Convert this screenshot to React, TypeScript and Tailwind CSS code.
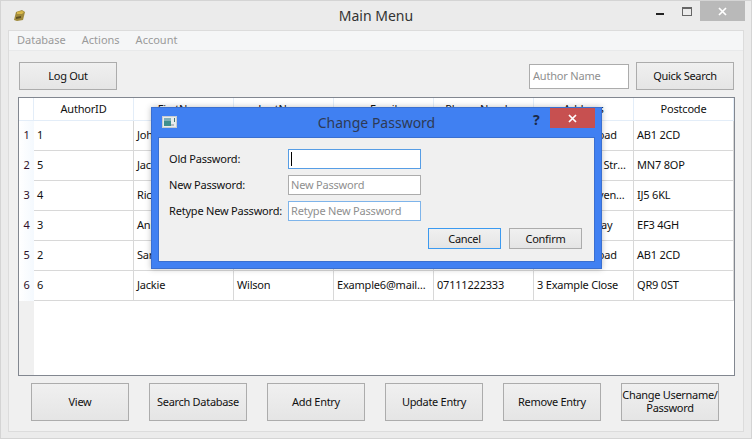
const font = "font-['Noto_Sans','Open_Sans',sans-serif]";

const columns = ["AuthorID", "FirstName", "LastName", "Email", "Phone Number", "Address", "Postcode"];

const rows = [
  ["1", "John", "Smith", "Example1@mail.com", "07123456789", "1 Example Road", "AB1 2CD"],
  ["5", "Jack", "Jones", "Example5@mail.com", "07987654321", "555 Example Street", "MN7 8OP"],
  ["4", "Rick", "Brown", "Example4@mail.com", "07555666777", "4 Example Avenue", "IJ5 6KL"],
  ["3", "Anna", "Green", "Example3@mail.com", "07444333222", "3 Example Way", "EF3 4GH"],
  ["2", "Sarah", "White", "Example2@mail.com", "07222333444", "1 Example Road", "AB1 2CD"],
  ["6", "Jackie", "Wilson", "Example6@mail.com", "07111222333", "3 Example Close", "QR9 0ST"],
];

const bottomButtons = ["View", "Search Database", "Add Entry", "Update Entry", "Remove Entry"];

function Button({ children, className = "" }: { children: React.ReactNode; className?: string }) {
  return (
    <button className={`shrink-0 border border-[#acacac] bg-gradient-to-b from-[#f0f0f0] to-[#e5e5e5] text-[11px] leading-[13px] tracking-[-0.3px] text-[#111] ${className}`}>
      {children}
    </button>
  );
}

function AppIcon() {
  return (
    <svg width="13" height="13" viewBox="0 0 13 13">
      <path d="M1 11 L3 3 L9 1 L12 3 L10 11 L4 12 Z" fill="#a08a3c" />
      <path d="M4 3 L9 2 L11 3 L9 5 L4 5 Z" fill="#d8b84a" />
      <path d="M3 8 L8 7 L8 9 L3 10 Z" fill="#5e4f22" />
    </svg>
  );
}

function DialogIcon() {
  return (
    <svg width="15" height="12" viewBox="0 0 15 12">
      <rect x="0.5" y="0.5" width="14" height="11" fill="#e8ecec" stroke="#c8ccd0" />
      <rect x="2" y="2" width="7" height="8" fill="#3f8f8f" />
      <rect x="2" y="2" width="7" height="3" fill="#7fb0b8" />
      <rect x="9" y="8" width="3" height="2" fill="#b8bcc0" />
      <rect x="12" y="2" width="1" height="4" fill="#477" />
    </svg>
  );
}

function Table() {
  return (
    <div className="ml-[9px] mt-[7px] h-[279px] w-[717px] overflow-hidden border border-[#828790] bg-white text-[11px] tracking-[-0.2px] text-[#111]">
      <div className="flex h-[23px] border-b border-[#e3edf8]">
        <div className="w-[15px] shrink-0 border-r border-[#e3edf8]" />
        {columns.map((c) => (
          <div key={c} className="w-[100px] shrink-0 border-r border-[#e3edf8] text-center leading-[21px]">
            {c}
          </div>
        ))}
      </div>
      <div className="flex h-[254px]">
        <div className="w-[15px] shrink-0 bg-[#f0f0f0]">
          {rows.map((_, i) => (
            <div key={i} className="h-[30px] bg-gradient-to-r from-white to-[#f4f9fe] text-center leading-[28px] text-[#30102a]">
              {i + 1}
            </div>
          ))}
        </div>
        <div>
          {rows.map((row, i) => (
            <div key={i} className="flex h-[30px] border-b border-[#d8d8d8]">
              {row.map((cell, j) => (
                <div key={j} className="w-[100px] shrink-0 truncate border-r border-[#d8d8d8] pl-[3px] pr-[6px] leading-[28px]">
                  {cell}
                </div>
              ))}
            </div>
          ))}
        </div>
      </div>
    </div>
  );
}

function Dialog() {
  const fields = [
    { label: "Old Password:", placeholder: "", border: "border-[#569de5]", caret: true },
    { label: "New Password:", placeholder: "New Password", border: "border-[#acacac]", caret: false },
    { label: "Retype New Password:", placeholder: "Retype New Password", border: "border-[#7eb4ea]", caret: false },
  ];
  return (
    <div className="absolute left-[150px] top-[106px] flex h-[162px] w-[451px] flex-col border border-[#3a6fd0] bg-[#4080f2] shadow-[0_0_6px_rgba(0,0,0,0.25)]">
      <div className="relative flex h-[29px] shrink-0 items-center justify-center">
        <div className="absolute left-[10px] top-[8px] flex">
          <DialogIcon />
        </div>
        <span className="text-[14px] text-[#2e3a55]">Change Password</span>
        <span className="absolute left-[381px] top-[1px] text-[14px] font-bold text-[#1c2a48]">?</span>
        <div className="absolute left-[398px] top-0 flex h-[20px] w-[45px] items-center justify-center bg-[#c75050]">
          <svg width="9" height="9" viewBox="0 0 9 9">
            <path d="M1 1 L8 8 M8 1 L1 8" stroke="#fff" strokeWidth="1.7" />
          </svg>
        </div>
      </div>
      <div className="mx-[6px] flex h-[125px] flex-col border border-[#3a6fd0] bg-[#f0f0f0] pl-[10px] pt-[11px]">
        <div className="flex flex-col gap-[6px]">
          {fields.map((f) => (
            <div key={f.label} className="flex h-[20px] items-center text-[11px] tracking-[-0.2px]">
              <span className="w-[119px] shrink-0 whitespace-nowrap text-[#111]">{f.label}</span>
              <div className={`flex h-[20px] w-[133px] items-center border bg-white pl-[2px] text-[#8f8f8f] ${f.border}`}>
                {f.caret ? <div className="h-[14px] w-px bg-black" /> : f.placeholder}
              </div>
            </div>
          ))}
        </div>
        <div className="mt-[7px] flex gap-[8px] pl-[259px]">
          <Button className="h-[21px] w-[73px] !border-[#3c9af0]">Cancel</Button>
          <Button className="h-[21px] w-[73px]">Confirm</Button>
        </div>
      </div>
    </div>
  );
}

export default function App() {
  return (
    <div className={`relative h-[439px] w-[752px] overflow-hidden border border-[#d4d4d4] bg-[#ebebeb] ${font}`}>
      {/* title bar */}
      <div className="relative flex h-[29px] items-center justify-center">
        <div className="absolute left-[12px] top-[8px] flex">
          <AppIcon />
        </div>
        <span className="text-[14px] text-[#333]">Main Menu</span>
        <div className="absolute left-[655px] top-[12px] h-[2px] w-[8px] bg-[#222]" />
        <div className="absolute left-[681px] top-[6px] h-[9px] w-[10px] border border-t-2 border-[#666]" />
        <div className="absolute left-[699px] top-0 flex h-[20px] w-[45px] items-center justify-center bg-[#b9b9b9]">
          <svg width="9" height="9" viewBox="0 0 9 9">
            <path d="M1 1 L8 8 M8 1 L1 8" stroke="#fff" strokeWidth="1.7" />
          </svg>
        </div>
      </div>

      {/* client area */}
      <div className="mx-[7px] h-[402px] border border-[#dcdcdc] bg-[#f0f0f0]">
        <div className="flex h-[20px] items-center gap-[16px] border-b border-[#e8e9ea] bg-[#f5f6f7] pl-[8px] text-[11px] text-[#9a9a9a]">
          <span>Database</span>
          <span>Actions</span>
          <span>Account</span>
        </div>
        <div className="mt-[11px] flex h-[28px] items-center pl-[10px] pr-[9px]">
          <Button className="h-[28px] w-[98px] pb-[2px]">Log Out</Button>
          <div className="ml-auto flex h-[25px] w-[100px] items-center border border-[#acacac] bg-white pl-[3px] text-[11px] tracking-[-0.2px] text-[#8f8f8f]">
            Author Name
          </div>
          <Button className="ml-[7px] h-[28px] w-[98px] pb-[2px]">Quick Search</Button>
        </div>
        <Table />
        <div className="mt-[7px] flex gap-[20px] pl-[22px]">
          {bottomButtons.map((b) => (
            <Button key={b} className="h-[38px] w-[98px] pb-[2px]">
              {b}
            </Button>
          ))}
          <Button className="h-[38px] w-[98px] whitespace-nowrap pb-[2px]">
            Change Username/
            <br />
            Password
          </Button>
        </div>
      </div>

      <Dialog />
    </div>
  );
}
